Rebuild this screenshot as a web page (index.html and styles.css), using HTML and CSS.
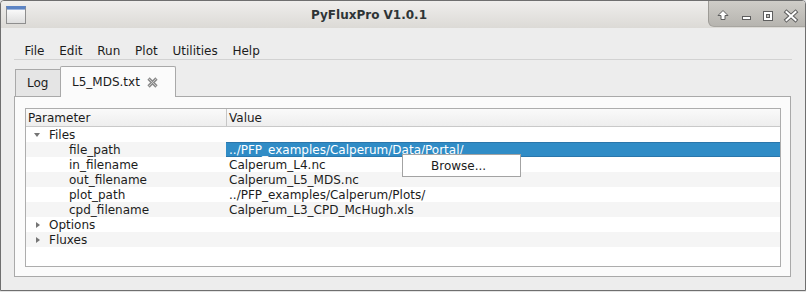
FILE: index.html
```html
<!DOCTYPE html>
<html lang="en">
<head>
    <meta charset="UTF-8">
    <title>PyFluxPro V1.0.1</title>
    <link rel="stylesheet" href="styles.css">
</head>
<body>
    <div class="window">
        <div class="titlebar">
            <div class="app-icon"></div>
            <div class="title">PyFluxPro V1.0.1</div>
            <div class="wm-buttons">
                <svg width="96" height="25" viewBox="0 0 96 25">
                    <!-- keep above -->
                    <path d="M14 9.5 L19 14.5 L16 14.5 L16 18.5 L12 18.5 L12 14.5 L9 14.5 Z" fill="#fff" stroke="#5e5e5e" stroke-width="1" stroke-linejoin="round"/>
                    <!-- minimize -->
                    <rect x="33.5" y="15.5" width="8" height="3" fill="#fff" stroke="#5e5e5e"/>
                    <!-- maximize -->
                    <rect x="54.5" y="10.5" width="9" height="9" fill="none" stroke="#5e5e5e"/>
                    <rect x="56" y="12" width="6" height="6" fill="none" stroke="#fff" stroke-width="2"/>
                    <rect x="57.5" y="13.5" width="3" height="3" fill="none" stroke="#5e5e5e"/>
                    <!-- close -->
                    <path d="M77.5 11 L86.5 19 M86.5 11 L77.5 19" stroke="#5e5e5e" stroke-width="4" stroke-linecap="square"/>
                    <path d="M77.5 11 L86.5 19 M86.5 11 L77.5 19" stroke="#fff" stroke-width="2" stroke-linecap="square"/>
                </svg>
            </div>
        </div>

        <div class="menubar">
            <span class="menu-item">File</span>
            <span class="menu-item">Edit</span>
            <span class="menu-item">Run</span>
            <span class="menu-item">Plot</span>
            <span class="menu-item">Utilities</span>
            <span class="menu-item">Help</span>
        </div>

        <div class="tabbar">
            <div class="tab">Log</div>
            <div class="tab active">
                L5_MDS.txt
                <svg class="tab-close" width="11" height="11" viewBox="0 0 11 11">
                    <path d="M1.5 1.5 L9.5 9.5 M9.5 1.5 L1.5 9.5" stroke="#8c8c8c" stroke-width="3.2"/>
                    <path d="M1.5 1.5 L9.5 9.5 M9.5 1.5 L1.5 9.5" stroke="#c9c9c9" stroke-width="1"/>
                </svg>
            </div>
        </div>

        <div class="tabpanel">
            <div class="tree">
                <div class="tree-head">
                    <div class="col-param">Parameter</div>
                    <div class="col-value">Value</div>
                </div>

                <div class="row">
                    <div class="col-param level-0"><span class="arrow open"></span>Files</div>
                    <div class="col-value"></div>
                </div>
                <div class="row alt">
                    <div class="col-param level-1">file_path</div>
                    <div class="col-value selected">../PFP_examples/Calperum/Data/Portal/</div>
                </div>
                <div class="row">
                    <div class="col-param level-1">in_filename</div>
                    <div class="col-value">Calperum_L4.nc</div>
                </div>
                <div class="row alt">
                    <div class="col-param level-1">out_filename</div>
                    <div class="col-value">Calperum_L5_MDS.nc</div>
                </div>
                <div class="row">
                    <div class="col-param level-1">plot_path</div>
                    <div class="col-value">../PFP_examples/Calperum/Plots/</div>
                </div>
                <div class="row alt">
                    <div class="col-param level-1">cpd_filename</div>
                    <div class="col-value">Calperum_L3_CPD_McHugh.xls</div>
                </div>
                <div class="row">
                    <div class="col-param level-0"><span class="arrow"></span>Options</div>
                    <div class="col-value"></div>
                </div>
                <div class="row alt">
                    <div class="col-param level-0"><span class="arrow"></span>Fluxes</div>
                    <div class="col-value"></div>
                </div>

                <div class="popup">Browse...</div>
            </div>
        </div>
    </div>
</body>
</html>
```

FILE: styles.css
```css
body {
    margin: 0;
    width: 806px;
    height: 292px;
    background: #e4e4e4;
    font-family: "DejaVu Sans", sans-serif;
    font-size: 12px;
    line-height: 15px;
    color: #1c1c1c;
    overflow: hidden;
}
.window {
    box-sizing: border-box;
    height: 291px;
    border: 1px solid #6f6f6f;
    border-radius: 4px 4px 0 0;
    background: #ededed;
    display: flex;
    flex-direction: column;
}

/* title bar */
.titlebar {
    height: 27px;
    flex: none;
    display: flex;
    background: linear-gradient(#efeeec, #dcdad6);
    border-radius: 3px 3px 0 0;
}
.app-icon {
    box-sizing: border-box;
    width: 20px;
    height: 18px;
    margin: 5px 0 0 5px;
    border: 1px solid #8e8e8e;
    border-top: 3px solid #5c84c4;
    background: linear-gradient(#fbfbfb, #dedede);
    box-shadow: inset 0 1px 0 #9db6de;
}
.title {
    flex: 1;
    text-align: center;
    font-weight: bold;
    color: #2e3436;
    padding-top: 7px;
    padding-left: 4px;
}
.wm-buttons {
    width: 96px;
    height: 25px;
    background: linear-gradient(#cfcdc8, #b6b4af);
    border-left: 1px solid #9d9b96;
    border-bottom: 1px solid #a7a5a0;
    border-radius: 0 3px 0 6px;
}
.wm-buttons svg { display: block; }

/* menu */
.menubar {
    display: flex;
    margin: 0 13px;
    padding: 16px 0 0 3px;
    border-bottom: 1px solid #d2d2d2;
}
.menu-item {
    padding: 0 7.4px;
}

/* tabs */
.tabbar {
    height: 36px;
    flex: none;
    display: flex;
    align-items: flex-end;
    margin-left: 14px;
}
.tab {
    box-sizing: border-box;
    width: 45px;
    height: 27px;
    padding: 6px 0 0 11px;
    border: 1px solid #a9a9a9;
    border-bottom: none;
    border-right: none;
    background: #e5e5e5;
}
.tab.active {
    width: 116px;
    height: 31px;
    margin-bottom: -1px;
    padding: 8px 0 0 11px;
    border-right: 1px solid #a9a9a9;
    border-radius: 2px 2px 0 0;
    background: #fbfbfb;
    position: relative;
    z-index: 1;
    display: flex;
    align-items: flex-start;
}
.tab-close {
    margin: 2px 0 0 7px;
}

/* panel */
.tabpanel {
    box-sizing: border-box;
    height: 181px;
    margin: 0 14px 0 13px;
    padding: 11px 9px 9px 10px;
    border: 1px solid #a9a9a9;
    background: #fbfbfb;
}
.tree {
    box-sizing: border-box;
    height: 159px;
    border: 1px solid #adadad;
    background: #fff;
    position: relative;
}
.tree-head {
    display: flex;
    height: 17px;
    border-bottom: 1px solid #c9c9c9;
    background: linear-gradient(#fafafa, #eeeeee);
}
.tree-head > div {
    padding-top: 2px;
}
.tree-head .col-value {
    border-left: 1px solid #c6c6c6;
    padding-left: 2px;
}
.col-param {
    box-sizing: border-box;
    width: 200px;
    padding-left: 2px;
    flex: none;
}
.col-value {
    flex: 1;
    padding-left: 3px;
}
.row {
    display: flex;
    height: 15px;
    line-height: 17px;
}
.row.alt { background: #f5f5f5; }
.level-0 {
    padding-left: 7px;
    display: flex;
}
.level-0 .arrow {
    width: 16px;
    height: 15px;
    position: relative;
}
.arrow::before {
    content: "";
    position: absolute;
    left: 3px;
    top: 5px;
    border-left: 4px solid #757575;
    border-top: 3px solid transparent;
    border-bottom: 3px solid transparent;
}
.arrow.open::before {
    left: 1px;
    top: 6px;
    border-top: 4px solid #757575;
    border-left: 3px solid transparent;
    border-right: 3px solid transparent;
    border-bottom: none;
}
.level-1 {
    padding-left: 43px;
}
.selected {
    box-sizing: border-box;
    background: #308cc6;
    border-top: 1px solid #2a76ab;
    border-bottom: 1px solid #2a76ab;
    color: #fff;
    line-height: 15px;
}

/* editor popup */
.popup {
    position: absolute;
    left: 376px;
    top: 45px;
    box-sizing: border-box;
    width: 119px;
    height: 23px;
    padding: 4px 0 0 28px;
    border: 1px solid #a3a3a3;
    background: #fff;
}
```
